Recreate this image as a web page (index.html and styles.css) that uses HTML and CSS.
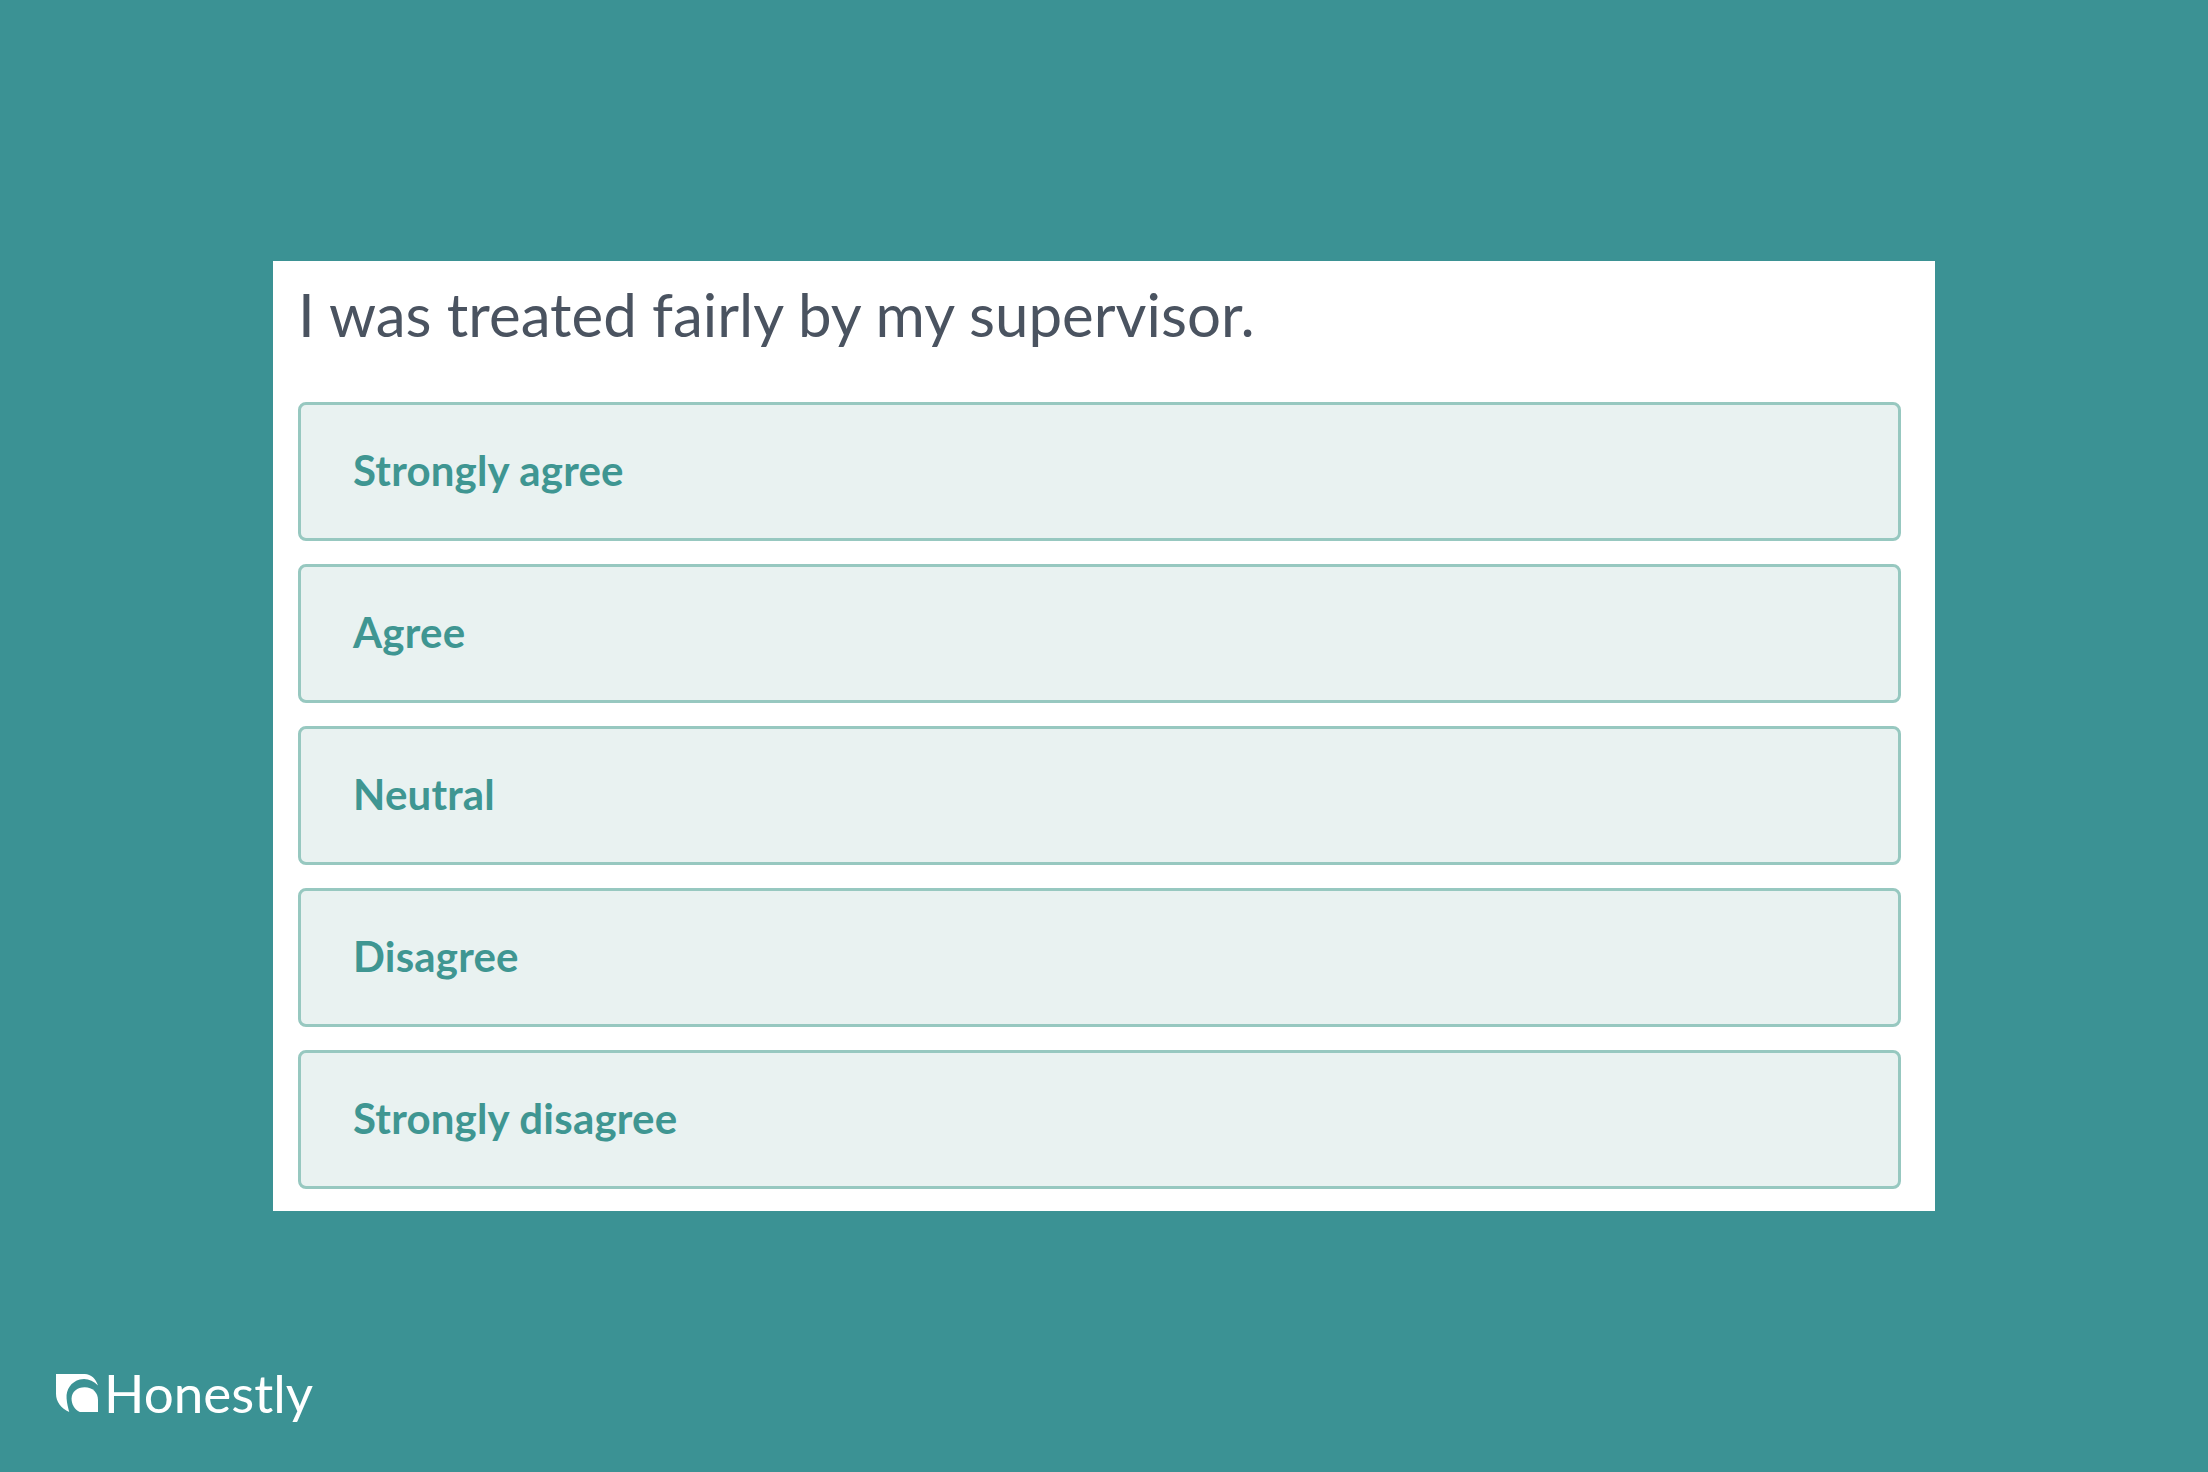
FILE: index.html
```html
<!DOCTYPE html>
<html lang="en">
<head>
    <meta charset="UTF-8">
    <meta name="viewport" content="width=device-width, initial-scale=1.0">
    <title>Honestly survey question</title>
    <link rel="stylesheet" href="styles.css">
</head>
<body>
    <div class="card">
        <h2 class="question">I was treated fairly by my supervisor.</h2>
        <div class="options">
            <div class="option">Strongly agree</div>
            <div class="option">Agree</div>
            <div class="option">Neutral</div>
            <div class="option">Disagree</div>
            <div class="option">Strongly disagree</div>
        </div>
    </div>

    <div class="brand">
        <svg class="brand-icon" viewBox="0 0 127 115" aria-hidden="true">
            <path d="M0 0H87C106 0 121 15 127 35C112 19 92 12 72 17C46 24 30 47 32 74C33 89 37 103 40 115C15 104 0 84 0 60Z"/>
            <path d="M127 115H72C56 108 47 91 47 75C47 54 64 40 87 40C110 40 127 56 127 78Z"/>
        </svg>
        <span class="brand-name">Honestly</span>
    </div>
</body>
</html>
```

FILE: styles.css
```css
body {
    font-family: Lato, Arial, sans-serif;
    background-color: #3b9294;
    height: 1472px;
    margin: 0;
    overflow: hidden;
}

.card {
    background-color: white;
    box-sizing: border-box;
    width: 1662px;
    height: 950px;
    margin: 261px 0 0 273px;
    padding: 0 34px 0 25px;
}

.question {
    margin: 0;
    padding-top: 18px;
    height: 141px;
    box-sizing: border-box;
    font-size: 60px;
    line-height: 70px;
    font-weight: 400;
    color: #4a5360;
}

.options {
    display: flex;
    flex-direction: column;
    gap: 23px;
}

.option {
    box-sizing: border-box;
    height: 139px;
    padding: 0 0 3px 52px;
    display: flex;
    align-items: center;
    background-color: #e9f2f1;
    border: 3px solid #97c8c0;
    border-radius: 8px;
    font-size: 42px;
    letter-spacing: 0.2px;
    font-weight: 700;
    color: #3f9692;
}

.brand {
    display: flex;
    align-items: center;
    gap: 6px;
    margin: 152px 0 0 56px;
    color: white;
}

.brand-icon {
    width: 42px;
    height: 38px;
    fill: white;
}

.brand-name {
    font-size: 53px;
    line-height: 60px;
    font-weight: 400;
}
```
